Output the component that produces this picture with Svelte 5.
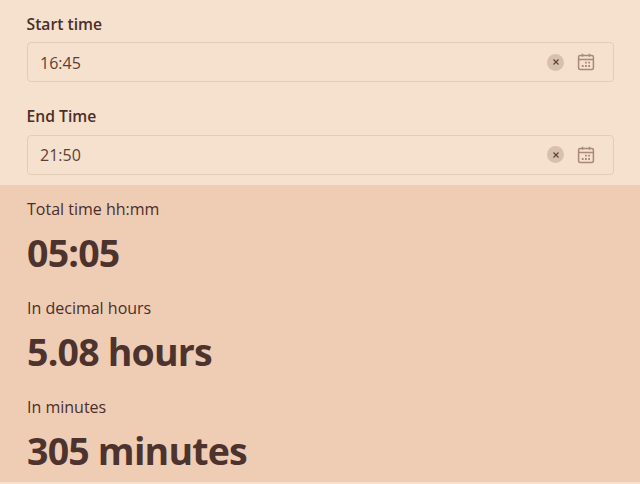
<script>
  const times = [
    { label: 'Start time', value: '16:45' },
    { label: 'End Time', value: '21:50' }
  ];
  const results = [
    { label: 'Total time hh:mm', value: '05:05' },
    { label: 'In decimal hours', value: '5.08 hours' },
    { label: 'In minutes', value: '305 minutes' }
  ];
</script>

<div class="page">
  <section class="inputs">
    {#each times as t}
      <div class="field">
        <div class="field-label">{t.label}</div>
        <div class="picker">
          <span class="value">{t.value}</span>
          <span class="clear">
            <svg width="8" height="8" viewBox="0 0 8 8"><path d="M1.5 1.5l5 5M6.5 1.5l-5 5" stroke="#5a3f38" stroke-width="1.1" fill="none"/></svg>
          </span>
          <svg class="cal" width="18" height="18" viewBox="0 0 18 18" fill="none" stroke="#a98a78" stroke-width="1.5">
            <rect x="1.6" y="2.6" width="14.8" height="14" rx="1.5"/>
            <path d="M1.6 6.5h14.8M5.5 .8v3M12.5 .8v3"/>
            <path stroke-width="1.9" d="M8 9.6h1.8M11.2 9.6h1.8M4.8 13h1.8M8 13h1.8M11.2 13h1.8"/>
          </svg>
        </div>
      </div>
    {/each}
  </section>
  <section class="results">
    {#each results as r}
      <div class="result">
        <div class="result-label">{r.label}</div>
        <div class="result-value">{r.value}</div>
      </div>
    {/each}
  </section>
</div>

<style>
  :global(body) {
    margin: 0;
    background: #f5e1cd;
    font-family: "Open Sans", "Noto Sans", sans-serif;
    color: #4a2f2b;
  }
  .page {
    height: 484px;
    display: flex;
    flex-direction: column;
    overflow: hidden;
  }
  .inputs {
    flex: none;
    height: 185px;
    box-sizing: border-box;
    padding: 13.5px 26px 0 26.5px;
    display: flex;
    flex-direction: column;
    gap: 24px;
  }
  .field-label {
    font-size: 15.7px;
    font-weight: 600;
    line-height: 21px;
    margin-bottom: 7.5px;
  }
  .picker {
    height: 40px;
    box-sizing: border-box;
    border: 1px solid #e3cdb9;
    border-radius: 4px;
    display: flex;
    align-items: center;
    padding: 0 18px 0 12.5px;
  }
  .value {
    flex: 1;
    font-size: 16px;
    padding-top: 1px;
    color: #5d3f35;
  }
  .clear {
    width: 17px;
    height: 17px;
    border-radius: 50%;
    background: #d8c0ae;
    display: flex;
    align-items: center;
    justify-content: center;
    margin-right: 13px;
  }
  .results {
    flex: none;
    height: 297px;
    box-sizing: border-box;
    background: #efccb4;
    padding: 14px 27px 0;
  }
  .result {
    height: 99px;
  }
  .result-label {
    font-size: 16px;
    line-height: 21px;
  }
  .result-value {
    font-size: 37.5px;
    font-weight: 700;
    letter-spacing: -0.8px;
    line-height: 50px;
    margin-top: 8px;
    color: #4d332e;
  }
</style>
